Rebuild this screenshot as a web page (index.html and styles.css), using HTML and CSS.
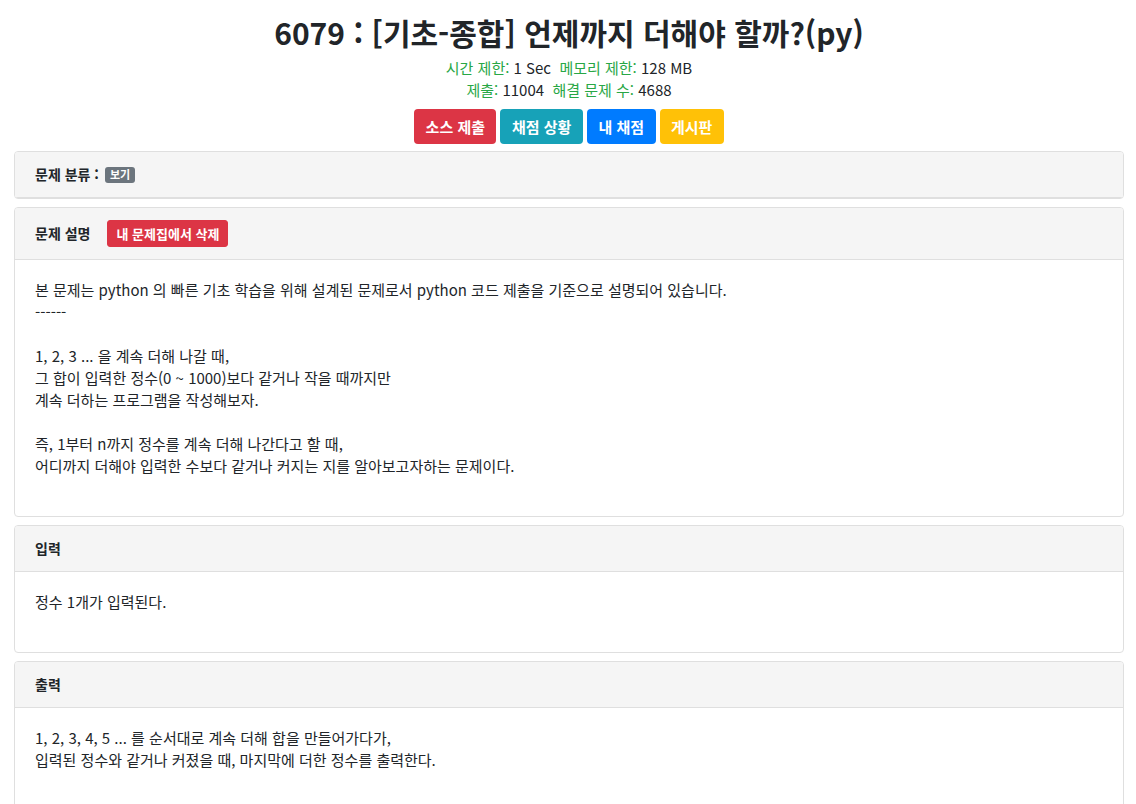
FILE: index.html
```html
<!DOCTYPE html>
<html lang="ko">
<head>
<meta charset="utf-8">
<title>6079 : [기초-종합] 언제까지 더해야 할까?(py)</title>
<link rel="stylesheet" href="styles.css">
</head>
<body>
<div class="page">
  <header class="problem-head">
    <h1 class="title">6079 : [기초-종합] 언제까지 더해야 할까?(py)</h1>
    <div class="meta"><span class="label">시간 제한:</span> 1 Sec&nbsp; <span class="label">메모리 제한:</span> 128 MB</div>
    <div class="meta"><span class="label">제출:</span> 11004&nbsp; <span class="label">해결 문제 수:</span> 4688</div>
    <div class="actions">
      <a class="btn btn-red">소스 제출</a>
      <a class="btn btn-teal">채점 상황</a>
      <a class="btn btn-blue">내 채점</a>
      <a class="btn btn-yellow">게시판</a>
    </div>
  </header>

  <section class="card">
    <div class="card-header">문제 분류 :<span class="badge">보기</span></div>
  </section>

  <section class="card">
    <div class="card-header"><span>문제 설명</span><a class="btn-sm">내 문제집에서 삭제</a></div>
    <div class="card-body">
      <p>본 문제는 python 의 빠른 기초 학습을 위해 설계된 문제로서 python 코드 제출을 기준으로 설명되어 있습니다.<br>------<br><br>1, 2, 3 ... 을 계속 더해 나갈 때,<br>그 합이 입력한 정수(0 ~ 1000)보다 같거나 작을 때까지만<br>계속 더하는 프로그램을 작성해보자.<br><br>즉, 1부터 n까지 정수를 계속 더해 나간다고 할 때,<br>어디까지 더해야 입력한 수보다 같거나 커지는 지를 알아보고자하는 문제이다.</p>
    </div>
  </section>

  <section class="card">
    <div class="card-header">입력</div>
    <div class="card-body">
      <p>정수 1개가 입력된다.</p>
    </div>
  </section>

  <section class="card">
    <div class="card-header">출력</div>
    <div class="card-body">
      <p>1, 2, 3, 4, 5 ... 를 순서대로 계속 더해 합을 만들어가다가,<br>입력된 정수와 같거나 커졌을 때, 마지막에 더한 정수를 출력한다.</p>
    </div>
  </section>
</div>
</body>
</html>
```

FILE: styles.css
```css
* { box-sizing: border-box; }
html, body { margin: 0; padding: 0; background: #fff; }
body {
  font-family: "Noto Sans CJK KR", "Noto Sans", sans-serif;
  color: #212529;
  font-size: 15px;
  line-height: 1.5;
}
.page {
  padding: 0 12px 0 14px;
}
.problem-head {
  text-align: center;
  padding-top: 12px;
}
.title {
  margin: 0 0 5px;
  font-size: 30px;
  font-weight: 700;
  line-height: 40px;
  color: #212529;
}
.meta {
  font-size: 15px;
  line-height: 22px;
}
.label { color: #28a745; }
.actions {
  margin-top: 8px;
  margin-bottom: 7px;
  display: flex;
  justify-content: center;
  gap: 4px;
}
.btn {
  display: inline-block;
  color: #fff;
  font-weight: 700;
  font-size: 15px;
  line-height: 23px;
  padding: 5px 10.5px;
  border: 1px solid transparent;
  border-radius: 4px;
  text-decoration: none;
}
.btn-red { background: #dc3545; }
.btn-teal { background: #17a2b8; }
.btn-blue { background: #007bff; }
.btn-yellow { background: #ffc107; }

.card {
  border: 1px solid #dfdfdf;
  border-radius: 4px;
  margin-bottom: 8px;
  background: #fff;
  overflow: hidden;
}
.card-header {
  background: #f5f5f5;
  border-bottom: 1px solid #dfdfdf;
  padding: 12px 20px;
  font-size: 14px;
  font-weight: 700;
  line-height: 21px;
  display: flex;
  align-items: center;
}
.badge {
  display: inline-block;
  margin-left: 6px;
  background: #6c757d;
  color: #fff;
  font-size: 11px;
  font-weight: 700;
  line-height: 1;
  padding: 2.5px 5px;
  border-radius: 3px;
}
.btn-sm {
  display: inline-block;
  margin-left: 17px;
  background: #dc3545;
  color: #fff;
  font-size: 13px;
  font-weight: 700;
  line-height: 19px;
  padding: 3px 8px;
  border: 1px solid #dc3545;
  border-radius: 3px;
}
.card-body {
  padding: 19px 20px 20px;
}
.card-body p {
  margin: 0 0 19px;
  line-height: 22px;
}
```
